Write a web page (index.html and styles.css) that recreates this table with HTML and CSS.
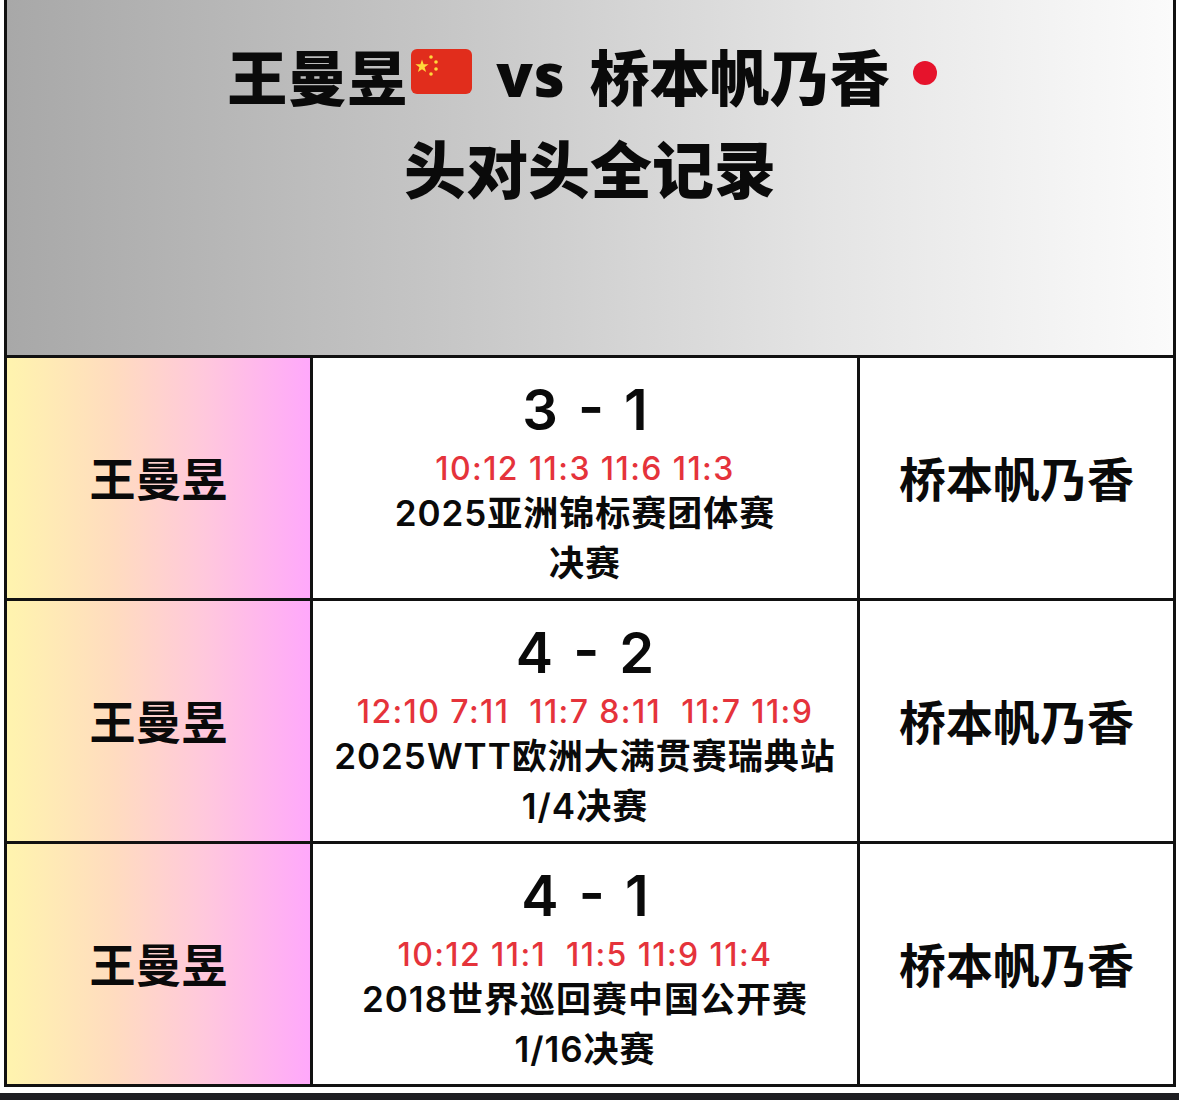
FILE: index.html
```html
<!DOCTYPE html>
<html lang="zh-CN">
<head>
<meta charset="utf-8">
<title>王曼昱 vs 桥本帆乃香 头对头全记录</title>
<link rel="stylesheet" href="styles.css">
</head>
<body>
<div class="card">
  <header class="header">
    <div class="title-line line1">
      <span>王曼昱</span><svg class="flag" viewBox="0 0 61 45" width="61" height="45" aria-hidden="true">
        <rect x="0" y="0" width="61" height="45" rx="6" fill="#e12d1c"/>
        <polygon fill="#ffd93b" points="11,10.5 12.6,15.3 17.6,15.3 13.6,18.3 15.1,23.1 11,20.2 6.9,23.1 8.4,18.3 4.4,15.3 9.4,15.3"/>
        <circle cx="20" cy="8" r="1.8" fill="#ffd93b"/>
        <circle cx="25" cy="13" r="1.8" fill="#ffd93b"/>
        <circle cx="25" cy="20" r="1.8" fill="#ffd93b"/>
        <circle cx="20" cy="25" r="1.8" fill="#ffd93b"/>
      </svg><span class="vs">vs</span><span>桥本帆乃香</span><span class="jp-dot"></span>
    </div>
    <div class="title-line line2">头对头全记录</div>
  </header>

  <div class="row">
    <div class="cell player left">王曼昱</div>
    <div class="cell match">
      <div class="score">3 - 1</div>
      <div class="games">10:12 11:3 11:6 11:3</div>
      <div class="event">2025亚洲锦标赛团体赛</div>
      <div class="event">决赛</div>
    </div>
    <div class="cell player right">桥本帆乃香</div>
  </div>

  <div class="row">
    <div class="cell player left">王曼昱</div>
    <div class="cell match">
      <div class="score">4 - 2</div>
      <div class="games">12:10 7:11 &nbsp;11:7 8:11 &nbsp;11:7 11:9</div>
      <div class="event">2025WTT欧洲大满贯赛瑞典站</div>
      <div class="event">1/4决赛</div>
    </div>
    <div class="cell player right">桥本帆乃香</div>
  </div>

  <div class="row">
    <div class="cell player left">王曼昱</div>
    <div class="cell match">
      <div class="score">4 - 1</div>
      <div class="games">10:12 11:1 &nbsp;11:5 11:9 11:4</div>
      <div class="event">2018世界巡回赛中国公开赛</div>
      <div class="event">1/16决赛</div>
    </div>
    <div class="cell player right">桥本帆乃香</div>
  </div>
</div>
<div class="bottom-bar"></div>
</body>
</html>
```

FILE: styles.css
```css
html, body {
  margin: 0;
  padding: 0;
  background: #ffffff;
}

body {
  width: 1179px;
  height: 1100px;
  overflow: hidden;
  font-family: "Noto Sans CJK SC", "Noto Sans", sans-serif;
  color: #111111;
  display: flex;
  flex-direction: column;
}

.card {
  margin-left: 4px;
  width: 1172px;
  box-sizing: border-box;
  border-left: 3px solid #111;
  border-right: 3px solid #111;
}

.header {
  height: 358px;
  box-sizing: border-box;
  border-bottom: 3px solid #111;
  background: linear-gradient(to right, #a8a8a8 0%, #c4c4c4 35%, #e4e4e4 70%, #fbfbfb 100%);
  padding-top: 28px;
  text-align: center;
}

.title-line {
  font-size: 60px;
  font-weight: 900;
  line-height: 93px;
  height: 93px;
  color: #0a0a0a;
  display: flex;
  justify-content: center;
  align-items: center;
}

.line1 {
  padding-right: 16px;
}

.line2 {
  font-size: 62px;
}

.flag {
  display: block;
  margin-left: 4px;
  margin-right: 24px;
  position: relative;
  top: -3px;
}

.vs {
  margin-right: 24px;
  font-family: "Noto Sans", "Noto Sans CJK SC", sans-serif;
  letter-spacing: 1px;
}

.jp-dot {
  display: block;
  width: 24px;
  height: 24px;
  border-radius: 50%;
  background: #e6132c;
  margin-left: 23px;
  position: relative;
  top: -2px;
}

.row {
  display: flex;
  height: 243px;
  box-sizing: border-box;
  border-bottom: 3px solid #111;
}

.cell {
  box-sizing: border-box;
}

.player {
  display: flex;
  align-items: center;
  justify-content: center;
  font-size: 46px;
  font-weight: 700;
  color: #0a0a0a;
}

.left {
  width: 306px;
  border-right: 3px solid #111;
  background: linear-gradient(to right, #fff4ae 0%, #ffdcbf 35%, #ffc8dc 65%, #ffa8fb 100%);
  padding-bottom: 4px;
}

.match {
  width: 547px;
  border-right: 3px solid #111;
  background: #ffffff;
  display: flex;
  flex-direction: column;
  align-items: center;
  padding-top: 22px;
}

.right {
  flex: 1;
  background: #ffffff;
  padding-bottom: 4px;
  font-size: 47px;
}

.score {
  font-family: "Inter", "Noto Sans CJK SC", sans-serif;
  font-size: 56px;
  font-weight: 600;
  line-height: 60px;
  height: 60px;
  word-spacing: 6px;
  color: #0a0a0a;
}

.games {
  font-family: "Inter", "Noto Sans CJK SC", sans-serif;
  margin-top: 10px;
  font-size: 32px;
  font-weight: 500;
  letter-spacing: 1.4px;
  line-height: 38px;
  height: 38px;
  color: #e5333b;
  white-space: nowrap;
}

.event {
  font-family: "Inter", "Noto Sans CJK SC", sans-serif;
  font-size: 35px;
  font-weight: 600;
  letter-spacing: 1px;
  line-height: 50px;
  height: 50px;
  color: #0a0a0a;
  white-space: nowrap;
}

.bottom-bar {
  margin-top: 6px;
  height: 8px;
  background: #1e1e22;
}
```
